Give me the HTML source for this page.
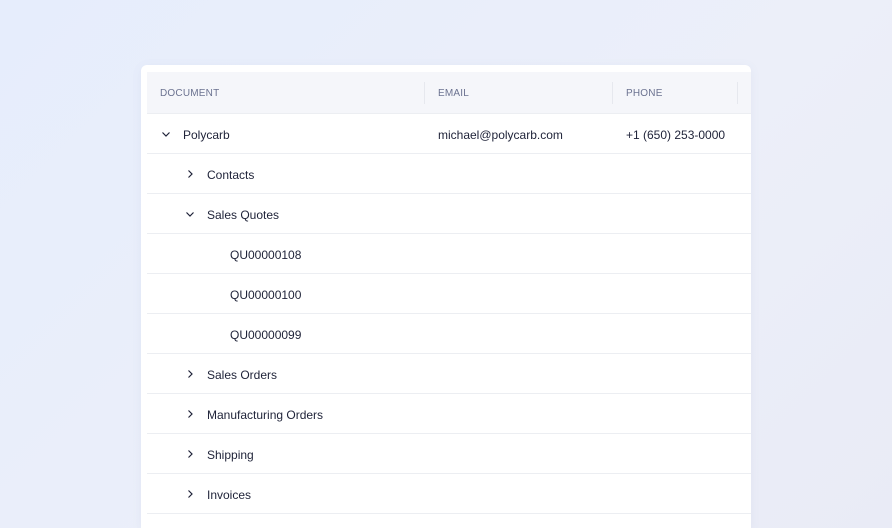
<!DOCTYPE html>
<html style="width:892px;height:528px;overflow:hidden"><head><style>
*{margin:0;padding:0;box-sizing:border-box}
body{width:892px;height:528px;overflow:hidden;background:linear-gradient(135deg,#e6edfc 0%,#eceff9 60%,#e9ebf6 100%);font-family:"Liberation Sans",sans-serif;color:#1e2238;position:relative}
.card{position:absolute;left:141px;top:65px;width:610px;height:463px;background:#fff;border-radius:6px 6px 0 0;box-shadow:0 2px 10px rgba(120,130,170,.08)}
.hdr{position:absolute;left:6px;top:7px;width:604px;height:42px;background:#f5f6fa;border-bottom:1px solid #eceef2}
.hdr span{position:absolute;top:16px;font-size:10px;color:#6b7290;letter-spacing:.2px}
.sep{position:absolute;top:10px;width:1px;height:22px;background:#e6e8ee}
.row{position:absolute;left:6px;width:604px;height:40px;border-bottom:1px solid #eceef2;font-size:12px}
.row span{position:absolute;top:14px}
.row svg{position:absolute;top:15px}
</style></head><body>
<div class="card">
<div class="hdr"><span style="left:13px">DOCUMENT</span><div class="sep" style="left:277px"></div><span style="left:291px">EMAIL</span><div class="sep" style="left:465px"></div><span style="left:479px">PHONE</span><div class="sep" style="left:590px"></div></div>
<div class="row" style="top:49px"><svg style="left:14px" width="10" height="10" viewBox="0 0 10 10"><path d="M1.5 3.5l3.5 3.5 3.5-3.5" fill="none" stroke="#1e2238" stroke-width="1.2"/></svg><span style="left:36px">Polycarb</span><span style="left:291px">michael@polycarb.com</span><span style="left:479px">+1 (650) 253-0000</span></div>
<div class="row" style="top:89px"><svg style="left:38px" width="10" height="10" viewBox="0 0 10 10"><path d="M3.5 1.5l3.5 3.5-3.5 3.5" fill="none" stroke="#1e2238" stroke-width="1.2"/></svg><span style="left:60px">Contacts</span></div>
<div class="row" style="top:129px"><svg style="left:38px" width="10" height="10" viewBox="0 0 10 10"><path d="M1.5 3.5l3.5 3.5 3.5-3.5" fill="none" stroke="#1e2238" stroke-width="1.2"/></svg><span style="left:60px">Sales Quotes</span></div>
<div class="row" style="top:169px"><span style="left:83px">QU00000108</span></div>
<div class="row" style="top:209px"><span style="left:83px">QU00000100</span></div>
<div class="row" style="top:249px"><span style="left:83px">QU00000099</span></div>
<div class="row" style="top:289px"><svg style="left:38px" width="10" height="10" viewBox="0 0 10 10"><path d="M3.5 1.5l3.5 3.5-3.5 3.5" fill="none" stroke="#1e2238" stroke-width="1.2"/></svg><span style="left:60px">Sales Orders</span></div>
<div class="row" style="top:329px"><svg style="left:38px" width="10" height="10" viewBox="0 0 10 10"><path d="M3.5 1.5l3.5 3.5-3.5 3.5" fill="none" stroke="#1e2238" stroke-width="1.2"/></svg><span style="left:60px">Manufacturing Orders</span></div>
<div class="row" style="top:369px"><svg style="left:38px" width="10" height="10" viewBox="0 0 10 10"><path d="M3.5 1.5l3.5 3.5-3.5 3.5" fill="none" stroke="#1e2238" stroke-width="1.2"/></svg><span style="left:60px">Shipping</span></div>
<div class="row" style="top:409px"><svg style="left:38px" width="10" height="10" viewBox="0 0 10 10"><path d="M3.5 1.5l3.5 3.5-3.5 3.5" fill="none" stroke="#1e2238" stroke-width="1.2"/></svg><span style="left:60px">Invoices</span></div>
</div>
</body></html>
